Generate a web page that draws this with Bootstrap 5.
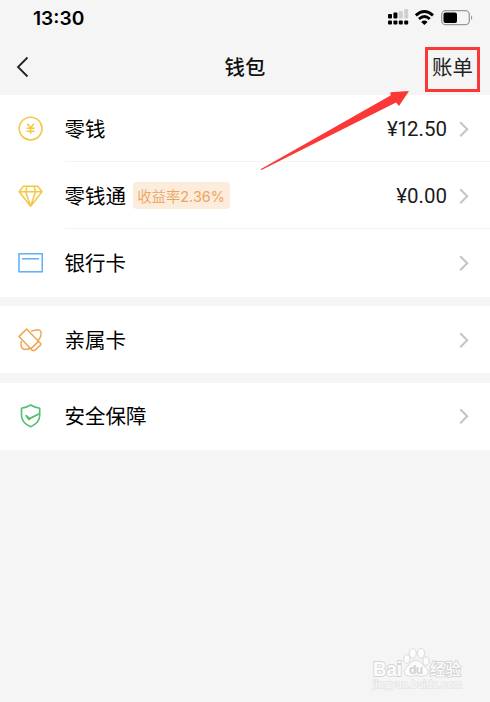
<!DOCTYPE html>
<html lang="zh-CN">
<head>
<meta charset="utf-8">
<meta name="viewport" content="width=device-width, initial-scale=1">
<title>钱包</title>
<link href="https://cdn.jsdelivr.net/npm/bootstrap@5.3.0/dist/css/bootstrap.min.css" rel="stylesheet">
<style>
body{background:#f5f5f5;font-family:"Liberation Sans","Noto Sans CJK SC",sans-serif;color:#111;height:702px;overflow:hidden}
svg{display:block;flex:none}
.status{height:38px;padding:0 17px 2px 33px}
.clock{font:600 19.2px/36px Inter,sans-serif;color:#000}
.topbar{height:57px;padding:0 10px 0 16px}
.topbar h1{font:500 20.4px/30px "Noto Sans CJK SC",sans-serif;padding:0 6px 1px 0}
.side{width:55px}
.bill{width:55px;height:45px;margin-top:5px;border:3px solid #fb3838;font:400 20.4px/33px "Noto Sans CJK SC",sans-serif;color:#222}
.group{background:#fff;margin-bottom:9.5px}
.item{height:67.2px;padding-left:18px}
.item-body{margin-left:20.5px;padding-right:21px}
.item + .item .item-body{box-shadow:0 -1px #f3f3f3}
.title{font:400 20.5px/30px "Noto Sans CJK SC",sans-serif;color:#000;padding-bottom:2px}
.rate{margin:0 0 1px 6.5px;width:97px;height:27px;border-radius:4px;background:#fbecdc;color:#eda55e;font:400 14.4px/27px Inter,"Noto Sans CJK SC",sans-serif}
.rate .cjk{font-family:"Noto Sans CJK SC",sans-serif;font-weight:350}
.amount{font:400 20.5px/30px Roboto,sans-serif;color:#1c1c1c;margin-right:12px}
.amount .one{letter-spacing:-1.8px;margin-left:-.6px}
.arrow{left:260px;top:90px}
.logo{left:370px;top:645px}
</style>
<script src="https://cdn.jsdelivr.net/npm/bootstrap@5.3.0/dist/js/bootstrap.bundle.min.js"></script>
</head>
<body class="position-relative">
<header>
  <div class="status d-flex align-items-center justify-content-between">
    <span class="clock">13:30</span>
    <svg width="86" height="20" viewBox="387 8 86 20">
      <g fill="#000"><rect x="388" y="20.6" width="4" height="4" rx="1"/><rect x="393.4" y="20.6" width="4" height="4" rx="1"/><rect x="398.8" y="20.6" width="4" height="4" rx="1"/><rect x="404.2" y="20.6" width="4" height="4" rx="1"/><rect x="388" y="14" width="4" height="4.6" rx="1"/><rect x="393.4" y="12.5" width="4" height="6.1" rx="1"/></g>
      <g fill="#cfcfcf"><rect x="398.8" y="11" width="4" height="7.6" rx="1"/><rect x="404.2" y="9" width="4" height="9.6" rx="1"/></g>
      <g fill="none" stroke="#000" stroke-width="2.9"><path d="M415.8 15.4Q424.4 7.6 433 15.4"/><path d="M419 19Q424.4 14.2 429.8 19"/></g>
      <path d="M421.2 22Q424.4 19.2 427.6 22L424.4 25Z"/>
      <rect x="441.7" y="10.7" width="27.6" height="14" rx="4" fill="none" stroke="#999" stroke-width="1.3"/><rect x="443.5" y="12.5" width="13.5" height="10.4" rx="2"/><path d="M471 15.2Q473.5 17.7 471 20.2Z" fill="#999"/>
    </svg>
  </div>
  <nav class="topbar d-flex align-items-center justify-content-between">
    <div class="side"><svg width="14" height="22" fill="none" stroke="#222" stroke-width="1.8"><path d="M11.5 1.5L2 11L11.5 20.5"/></svg></div>
    <h1 class="m-0">钱包</h1>
    <div class="bill text-center text-nowrap">账单</div>
  </nav>
</header>
<main>
  <section class="group">
    <div class="item d-flex align-items-center">
      <svg width="26" height="26" fill="none" stroke="#f4c744" stroke-width="1.6"><circle cx="12.6" cy="12.6" r="11.4"/><path d="M9.4 7.8L12.6 12L15.8 7.8M12.6 12V18M8.5 12.3H16.7M8.5 15.2H16.7"/></svg>
      <div class="item-body d-flex align-items-center flex-grow-1 h-100"><span class="title">零钱</span><span class="amount ms-auto">¥<span class="one">1</span>2.50</span><svg width="10" height="16" fill="none" stroke="#c4c4c6" stroke-width="2"><path d="M1.2 1.2L8.2 8.2L1.2 15.2"/></svg></div>
    </div>
    <div class="item d-flex align-items-center">
      <svg width="26" height="26" fill="none" stroke="#f4c744" stroke-width="1.5" stroke-linejoin="round"><path d="M5.4 3.2H19.8L24 8.8L12.6 23.3L1.2 8.8ZM1.2 8.8H24M9 3.2L7.7 8.8L12.6 23.3L17.5 8.8L16.2 3.2"/></svg>
      <div class="item-body d-flex align-items-center flex-grow-1 h-100"><span class="title">零钱通</span><span class="rate text-center text-nowrap"><span class="cjk">收益率</span>2.36%</span><span class="amount ms-auto">¥0.00</span><svg width="10" height="16" fill="none" stroke="#c4c4c6" stroke-width="2"><path d="M1.2 1.2L8.2 8.2L1.2 15.2"/></svg></div>
    </div>
    <div class="item d-flex align-items-center">
      <svg width="26" height="26" fill="none" stroke="#5cb0f5" stroke-width="1.5"><rect x="1" y="3.8" width="23.2" height="18"/><path d="M4 8.8H21"/></svg>
      <div class="item-body d-flex align-items-center flex-grow-1 h-100"><span class="title">银行卡</span><svg class="ms-auto" width="10" height="16" fill="none" stroke="#c4c4c6" stroke-width="2"><path d="M1.2 1.2L8.2 8.2L1.2 15.2"/></svg></div>
    </div>
  </section>
  <section class="group">
    <div class="item d-flex align-items-center">
      <svg width="26" height="26" fill="none" stroke="#eda550" stroke-width="1.5" stroke-linejoin="round"><path d="M8.6 2L22.6 16.4V18L16.4 23.6H14.4L1 9.6ZM20.6 14.4L13 21.6"/><path d="M13 4.4Q20.5 1.2 22.6 4.1Q24.5 9 19.5 14.4M3.5 14Q2.2 19.3 4.6 21.6Q7.5 23.4 12.2 21.3"/></svg>
      <div class="item-body d-flex align-items-center flex-grow-1 h-100"><span class="title">亲属卡</span><svg class="ms-auto" width="10" height="16" fill="none" stroke="#c4c4c6" stroke-width="2"><path d="M1.2 1.2L8.2 8.2L1.2 15.2"/></svg></div>
    </div>
  </section>
  <section class="group">
    <div class="item d-flex align-items-center">
      <svg width="26" height="26" fill="none" stroke="#55bd72" stroke-width="1.6" stroke-linejoin="round"><path d="M12.6 2Q17 4.7 21.7 5.2V13Q21 20.2 12.6 23.7Q4.2 20.2 3.5 13V5.2Q8.2 4.7 12.6 2Z"/><path d="M21.3 10.8L11.5 15.6L8.2 12.8L11 16.5L12.2 15.5" stroke-width="1.8"/></svg>
      <div class="item-body d-flex align-items-center flex-grow-1 h-100"><span class="title">安全保障</span><svg class="ms-auto" width="10" height="16" fill="none" stroke="#c4c4c6" stroke-width="2"><path d="M1.2 1.2L8.2 8.2L1.2 15.2"/></svg></div>
    </div>
  </section>
</main>
<svg class="arrow position-absolute" width="150" height="82" viewBox="260 90 150 82"><path d="M260.5 169.3L390.5 95.5V92.2L409 91L399 106L396 102.5L261.5 170Z" fill="#fb3838"/></svg>
<svg class="logo position-absolute" width="100" height="48" viewBox="370 645 100 48">
  <g fill="#fcfcfc" stroke="#dadada" stroke-width="1"><ellipse cx="406.8" cy="659" rx="3.2" ry="4.3"/><ellipse cx="412.8" cy="653.3" rx="3.5" ry="4.9"/><ellipse cx="421" cy="653.3" rx="3.5" ry="4.9"/><ellipse cx="426" cy="661" rx="3.2" ry="4.2"/><path d="M416 660Q420 660 424 666Q431 671 426.5 675.5Q423 677 416 675.5Q408 677 405.5 675Q402 671 408 666Q412 660 416 660Z"/></g>
  <g fill="#fcfcfc" stroke="#d4d4d4" stroke-width="1.8" paint-order="stroke" font-family="Liberation Sans, sans-serif"><text x="373" y="676" font-size="20" font-weight="700" textLength="29" lengthAdjust="spacingAndGlyphs">Bai</text><text x="430" y="675" font-size="15.5" font-weight="500" textLength="31" font-family="Noto Sans CJK SC, sans-serif">经验</text></g>
  <text x="409" y="674" font-size="12" font-weight="700" font-family="Liberation Sans, sans-serif" fill="#cfcfcf" textLength="14">du</text>
  <text x="373" y="688" font-size="10.5" font-family="Liberation Sans, sans-serif" fill="#fafafa" stroke="#e2e2e2" stroke-width="1.3" paint-order="stroke" textLength="89">jingyan.baidu.com</text>
</svg>
</body>
</html>
